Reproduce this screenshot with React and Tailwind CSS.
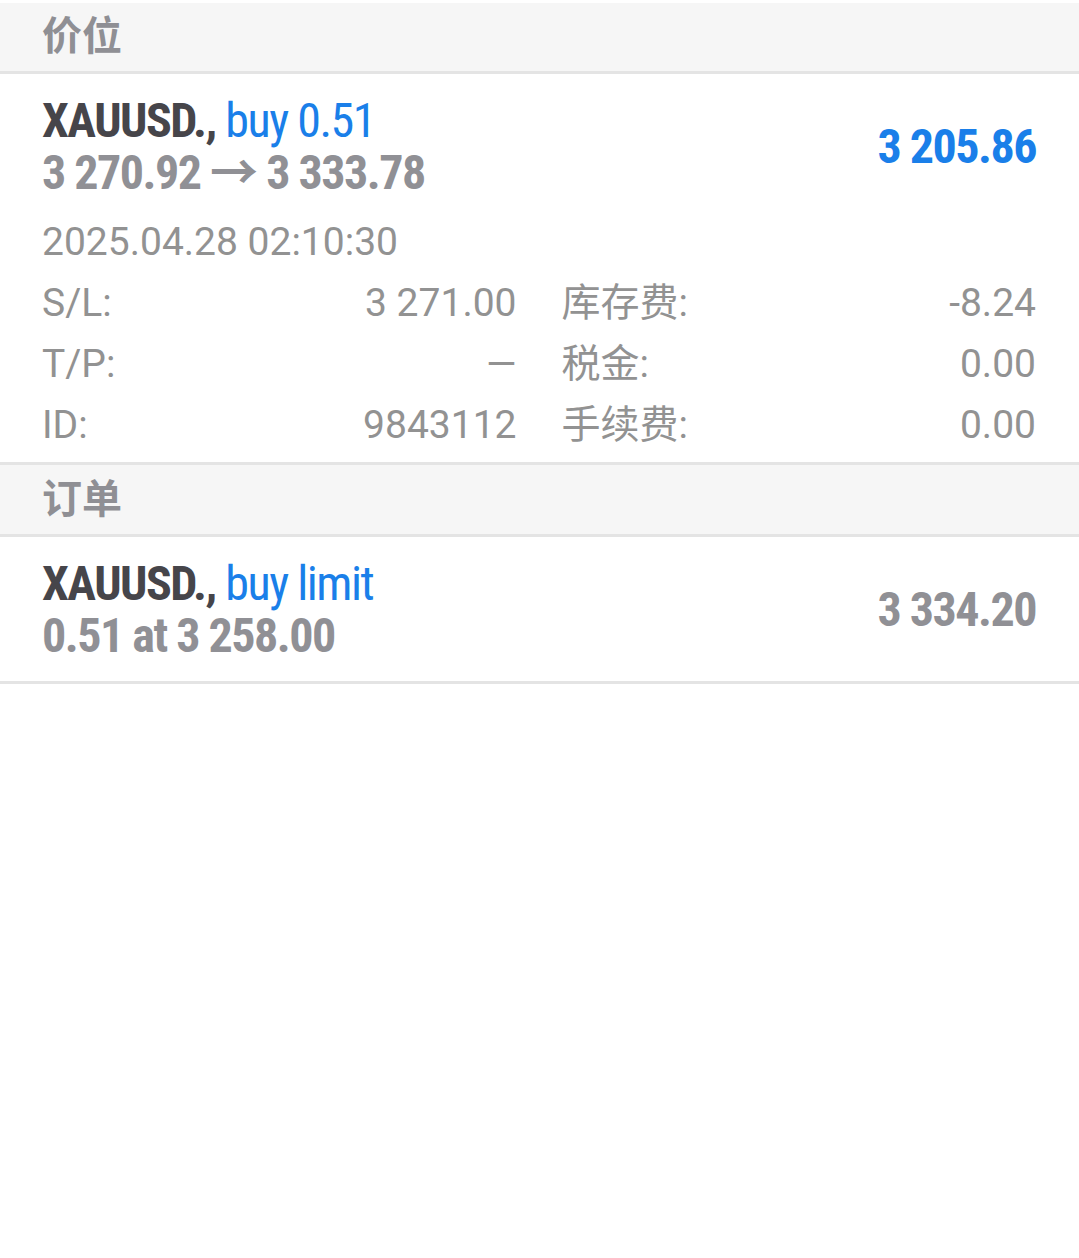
import React from 'react'

const cond = "font-['Roboto_Condensed','Liberation_Sans_Narrow',Roboto,'Noto_Sans_CJK_SC',sans-serif] font-bold tracking-[-1.5px]"
const reg = "font-['Roboto','Noto_Sans_CJK_SC',sans-serif]"

const SectionHeader = ({ title, tall }) => (
    <div className={`${tall ? 'h-[72px] pb-[7px]' : 'h-[71px] pb-[9px]'} flex items-center px-[42px] bg-[#f6f6f6] border-b-[3px] border-[#e4e4e4]`}>
        <span className="font-['Noto_Sans_CJK_SC',sans-serif] font-bold text-[40px] leading-none text-[#8f8f94]">{title}</span>
    </div>
)

const Detail = ({ label, value }) => (
    <div className="flex items-center justify-between h-[61px]">
        <span>{label}</span>
        <span>{value}</span>
    </div>
)

const App = () => {
    const left = [
        { label: 'S/L:', value: '3 271.00' },
        { label: 'T/P:', value: '—' },
        { label: 'ID:', value: '9843112' },
    ]
    const right = [
        { label: '库存费:', value: '-8.24' },
        { label: '税金:', value: '0.00' },
        { label: '手续费:', value: '0.00' },
    ]

    return (
        <div className="w-[1079px] min-h-[1258px] bg-white pt-[3px]">
            <SectionHeader title="价位" />

            {/* Position */}
            <div className="px-[42px] pr-[43px] pt-[21px] pb-[6px] border-b-[3px] border-[#e4e4e4]">
                <div className="flex items-center justify-between">
                    <div className={`${cond} text-[48px] leading-[52px]`}>
                        <div>
                            <span className="text-[#46454a]">XAUUSD.,</span>{' '}
                            <span className="text-[#1a7fe9] font-normal">buy 0.51</span>
                        </div>
                        <div className="text-[#909095]">3 270.92 → 3 333.78</div>
                    </div>
                    <div className={`${cond} text-[48px] text-[#1a7fe9]`}>3 205.86</div>
                </div>

                <div className={`${reg} mt-[13px] text-[39px] text-[#929292]`}>
                    <div className="h-[61px] flex items-center">2025.04.28 02:10:30</div>
                    <div className="grid grid-cols-2 gap-x-[45px]">
                        <div>
                            {left.map((r) => (
                                <Detail key={r.label} label={r.label} value={r.value} />
                            ))}
                        </div>
                        <div>
                            {right.map((r) => (
                                <Detail key={r.label} label={r.label} value={r.value} />
                            ))}
                        </div>
                    </div>
                </div>
            </div>

            <SectionHeader title="订单" tall />

            {/* Order */}
            <div className="px-[42px] pr-[43px] pt-[21px] pb-[19px] border-b-[3px] border-[#e4e4e4]">
                <div className="flex items-center justify-between">
                    <div className={`${cond} text-[48px] leading-[52px]`}>
                        <div>
                            <span className="text-[#46454a]">XAUUSD.,</span>{' '}
                            <span className="text-[#1a7fe9] font-normal">buy limit</span>
                        </div>
                        <div className="text-[#909095]">0.51 at 3 258.00</div>
                    </div>
                    <div className={`${cond} text-[48px] text-[#909095]`}>3 334.20</div>
                </div>
            </div>
        </div>
    )
}

export default App
